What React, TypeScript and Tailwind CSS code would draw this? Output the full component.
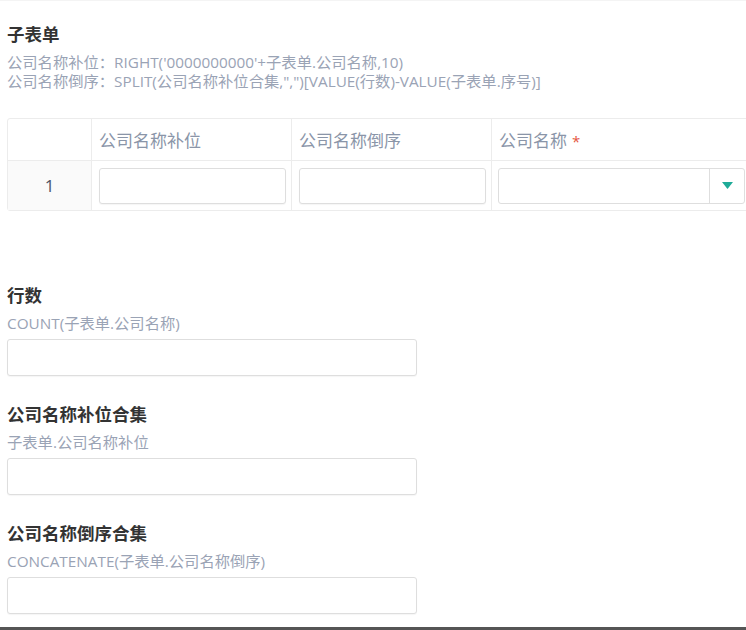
import React from "react";

const font = { fontFamily: '"Open Sans", "Noto Sans CJK SC", sans-serif' };

function TextInput({ className = "" }: { className?: string }) {
  return (
    <div
      className={`rounded-[3px] border border-[#dedede] bg-white shadow-[0_1px_1px_rgba(0,0,0,0.04)] ${className}`}
    />
  );
}

function Select() {
  return (
    <div className="flex h-[36px] w-full rounded-[3px] border border-[#dedede] bg-white">
      <div className="flex-1" />
      <div className="flex w-[35px] items-center justify-center border-l border-[#dedede]">
        <svg width="11" height="7" viewBox="0 0 11 7">
          <polygon points="0,0 11,0 5.5,7" fill="#1fab98" />
        </svg>
      </div>
    </div>
  );
}

function Field({ title, formula }: { title: string; formula: string }) {
  return (
    <div className="flex flex-col">
      <div className="text-[17.5px] font-bold leading-[24px] text-[#333]">{title}</div>
      <div className="mt-[7px] text-[15.3px] leading-[19px] text-[#9aa3b5]">{formula}</div>
      <TextInput className="mt-[6px] h-[37px] w-[410px]" />
    </div>
  );
}

export default function App() {
  return (
    <div
      className="relative flex h-[630px] w-[746px] flex-col overflow-hidden border-t border-[#f4f4f4] bg-white"
      style={font}
    >
      <div className="flex flex-col pl-[7px]">
        <div className="mt-[21px] text-[17.5px] font-bold leading-[24px] text-[#333]">子表单</div>
        <div className="mt-[7px] text-[15.3px] leading-[19px] text-[#9aa3b5]">
          <div>公司名称补位：RIGHT('0000000000'+子表单.公司名称,10)</div>
          <div>公司名称倒序：SPLIT(公司名称补位合集,",")[VALUE(行数)-VALUE(子表单.序号)]</div>
        </div>

        <div className="mt-[27px] w-max rounded-[3px] border border-[#ececec]">
          <div className="flex h-[42px] border-b border-[#ececec]">
            <div className="w-[83px]" />
            <div className="flex w-[200px] items-center border-l border-[#ececec] pl-[7px] pt-[3px] text-[17px] text-[#8a95a8]">
              公司名称补位
            </div>
            <div className="flex w-[200px] items-center border-l border-[#ececec] pl-[7px] pt-[3px] text-[17px] text-[#8a95a8]">
              公司名称倒序
            </div>
            <div className="flex w-[262px] items-center border-l border-[#ececec] pl-[7px] pt-[3px] text-[17px] text-[#8a95a8]">
              公司名称
              <span className="ml-[5px] text-[15px] text-[#e5563f]">*</span>
            </div>
          </div>
          <div className="flex h-[49px]">
            <div className="flex w-[83px] items-center justify-center bg-[#fafafa] text-[17px] text-[#4d5466]">
              1
            </div>
            <div className="flex w-[200px] items-center border-l border-[#ececec] pl-[7px] pr-[5px]">
              <TextInput className="h-[36px] w-full" />
            </div>
            <div className="flex w-[200px] items-center border-l border-[#ececec] pl-[7px] pr-[5px]">
              <TextInput className="h-[36px] w-full" />
            </div>
            <div className="flex w-[262px] items-center border-l border-[#ececec] pl-[6px] pr-[8px]">
              <Select />
            </div>
          </div>
        </div>

        <div className="mt-[72px] flex flex-col gap-[26px]">
          <Field title="行数" formula="COUNT(子表单.公司名称)" />
          <Field title="公司名称补位合集" formula="子表单.公司名称补位" />
          <Field title="公司名称倒序合集" formula="CONCATENATE(子表单.公司名称倒序)" />
        </div>
      </div>

      <div className="mt-auto h-[3px] w-full bg-[#555]" />
    </div>
  );
}
